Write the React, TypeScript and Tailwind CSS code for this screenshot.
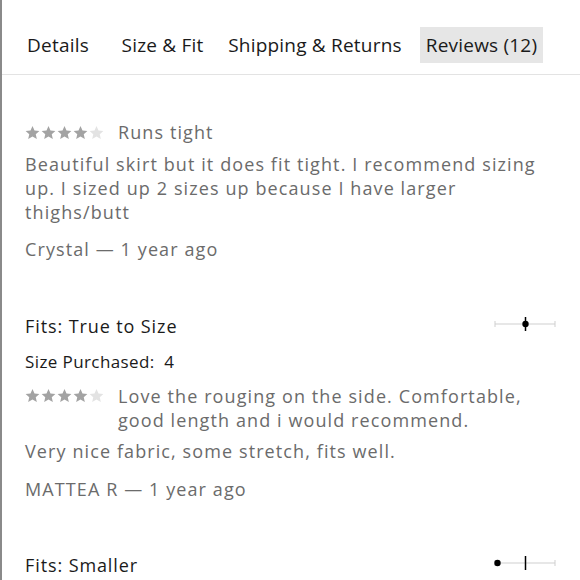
import React from 'react';

const Stars = ({ n }: { n: number }) => (
  <div className="flex gap-px shrink-0">
    {[0, 1, 2, 3, 4].map((i) => (
      <svg key={i} width="15" height="15" viewBox="0 0 24 24">
        <path
          d="M12 1.5l3.2 7.1 7.8.8-5.8 5.2 1.7 7.6L12 18.3l-6.9 3.9 1.7-7.6L1 9.4l7.8-.8z"
          fill={i < n ? '#a3a3a3' : '#e3e3e3'}
        />
      </svg>
    ))}
  </div>
);

const FitScale = ({ pos }: { pos: 'true' | 'small' }) => (
  <svg width="62" height="20" viewBox="0 0 62 20" className="-mt-1">
    <line x1="1" y1="10" x2="61" y2="10" stroke="#cfcfcf" strokeWidth="1" />
    <line x1="1" y1="7" x2="1" y2="13" stroke="#cfcfcf" strokeWidth="1" />
    <line x1="61" y1="7" x2="61" y2="13" stroke="#cfcfcf" strokeWidth="1" />
    <line x1="31.5" y1="3" x2="31.5" y2="17" stroke="#000" strokeWidth="1.5" />
    <circle cx={pos === 'true' ? 31.5 : 3.5} cy="10" r="3.2" fill="#000" />
  </svg>
);

const tabs = [
  { label: 'Details', w: 'w-[76px] mr-[19px]' },
  { label: 'Size & Fit', w: 'w-[95px] mr-[13px]' },
  { label: 'Shipping & Returns', w: 'w-[184px] mr-[13px]' },
  { label: 'Reviews (12)', w: 'w-[123px] bg-[#e6e6e6]' },
];

export default function App() {
  return (
    <div
      className="w-[580px] h-[580px] overflow-hidden bg-white border-l-2 border-[#8a8a8a]"
      style={{ fontFamily: '"Open Sans", sans-serif' }}
    >
      <div className="flex h-[75px] pt-[27px] border-b border-[#e3e3e3] pl-[18px] text-[19px] tracking-[0.2px] text-[#1a1a1a]">
        {tabs.map((t) => (
          <div key={t.label} className={'h-9 flex items-center justify-center whitespace-nowrap ' + t.w}>
            {t.label}
          </div>
        ))}
      </div>

      <div className="pl-[23px] pr-[24px] text-[18px] leading-6 tracking-[1.1px] text-[#6b6b6b]">
        <div className="pt-[45px] flex items-center gap-3.5">
          <Stars n={4} />
          <span>Runs tight</span>
        </div>
        <p className="mt-2 pr-2">
          Beautiful skirt but it does fit tight. I recommend sizing up. I sized up 2 sizes up because I
          have larger thighs/butt
        </p>
        <p className="mt-[13px]">Crystal — 1 year ago</p>

        <div className="mt-[53px] flex items-center justify-between text-[18px] tracking-[0.9px] text-[#1a1a1a]">
          <span>Fits: True to Size</span>
          <FitScale pos="true" />
        </div>
        <p className="mt-3 text-[17px] tracking-[0.4px] text-[#1a1a1a]">Size Purchased:&nbsp; 4</p>
        <div className="mt-2.5 flex items-start gap-3.5">
          <div className="pt-1">
            <Stars n={4} />
          </div>
          <p className="pr-2">
            Love the rouging on the side. Comfortable, good length and i would recommend.
          </p>
        </div>
        <p className="mt-[7px]">Very nice fabric, some stretch, fits well.</p>
        <p className="mt-3.5">MATTEA R — 1 year ago</p>

        <div className="mt-[52px] flex items-center justify-between text-[18px] tracking-[0.9px] text-[#1a1a1a]">
          <span>Fits: Smaller</span>
          <FitScale pos="small" />
        </div>
      </div>
    </div>
  );
}
